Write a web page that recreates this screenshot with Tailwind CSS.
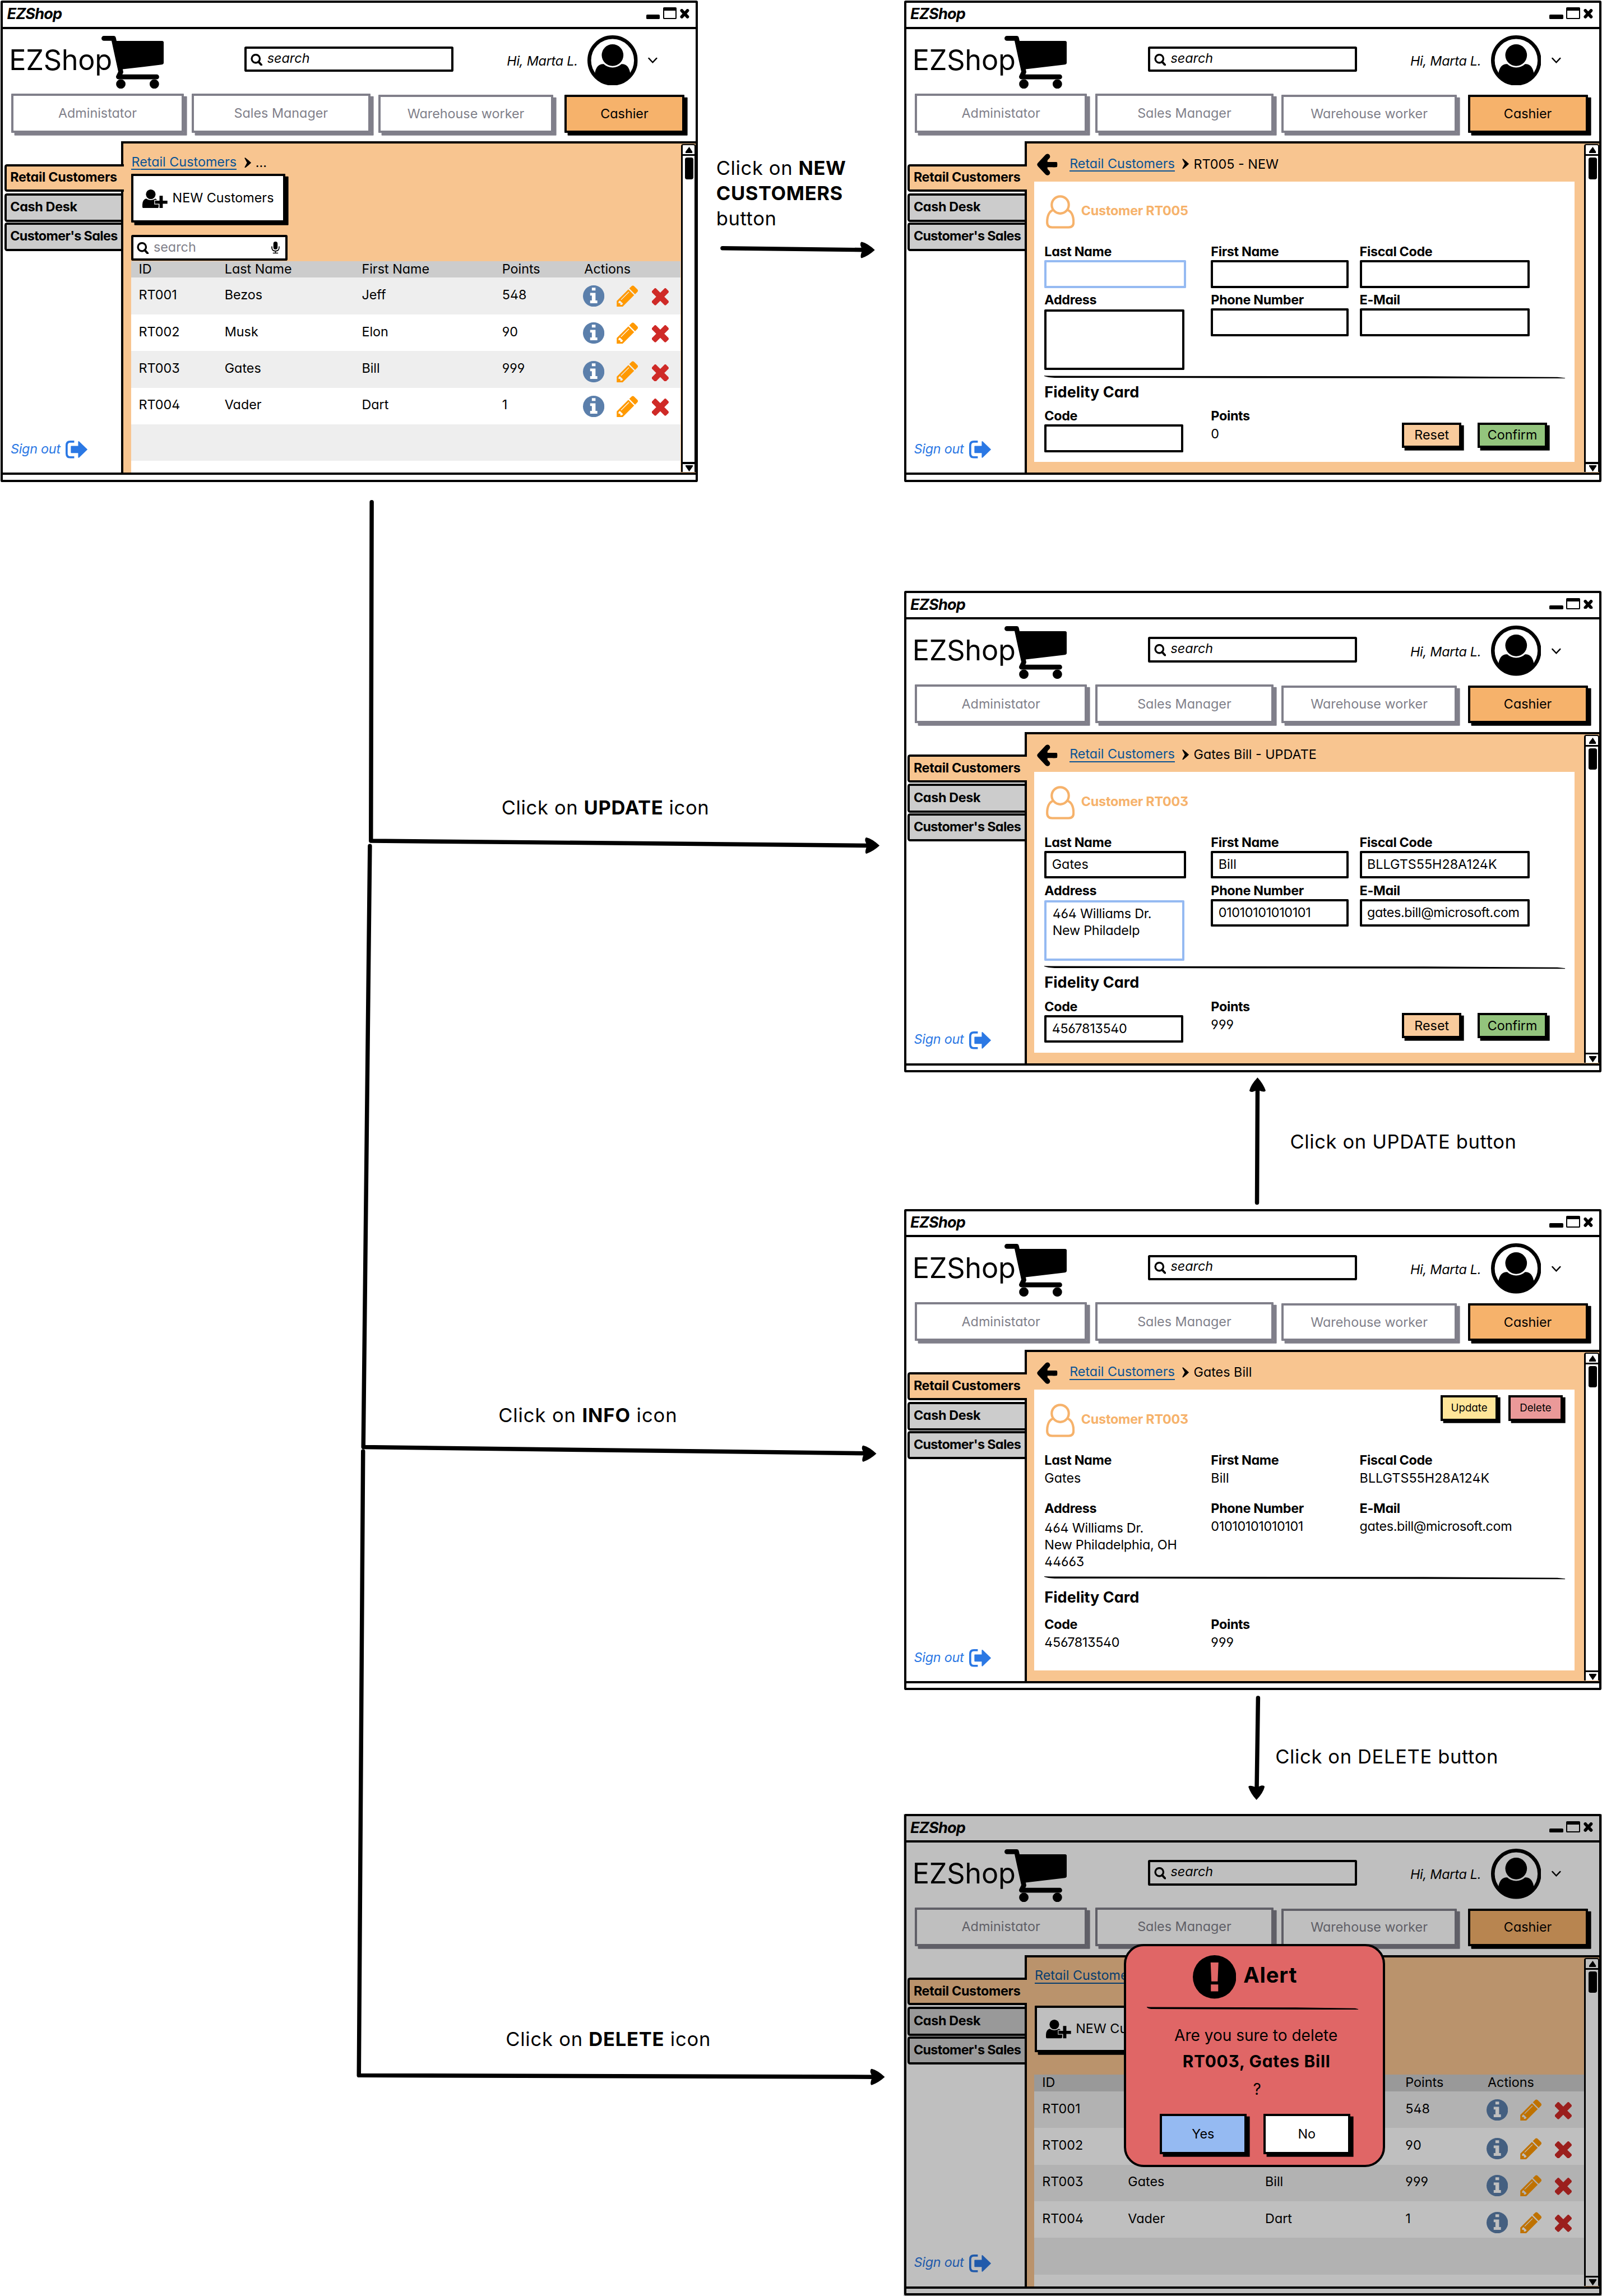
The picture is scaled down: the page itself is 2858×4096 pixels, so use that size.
<!DOCTYPE html>
<html lang="en">
<head>
<meta charset="utf-8">
<title>EZShop – Retail Customers flow</title>
<script src="https://cdn.jsdelivr.net/npm/@tailwindcss/browser@4"></script>
</head>
<body class="bg-white">
<svg class="hidden">
  <symbol id="cart" viewBox="0 0 119 101"><path d="M4.7 4.7H23L37 69 32.500 78.300H105.500" fill="none" stroke="#000" stroke-width="9.300" stroke-linecap="round" stroke-linejoin="round"/><path d="M24 9.700H116Q119 9.700 119 13V51Q119 54.500 115 55L38 64Z"/><circle cx="37" cy="92" r="9"/><circle cx="101" cy="92" r="9"/></symbol>
  <symbol id="avatar" viewBox="0 0 96 96"><circle cx="48" cy="48" r="44.500" fill="none" stroke="#000" stroke-width="7"/><circle cx="48" cy="37.800" r="20.700"/><path d="M14 74C15.500 62 21 54.500 31 55Q38 61.500 48 61.500T65 55C75 54.500 80.500 62 82 74A44 44 0 0 1 14 74Z"/></symbol>
  <symbol id="lens" viewBox="0 0 22 22"><circle cx="9.500" cy="9" r="7.400" fill="none" stroke="#000" stroke-width="3.400"/><path d="M14.500 14.500 20 20.500" stroke="#000" stroke-width="4" stroke-linecap="round"/></symbol>
  <symbol id="mic" viewBox="0 0 16 23"><rect x="4" width="8" height="15" rx="4"/><path d="M1 9V11Q1 18 8 18T15 11V9M8 18V22M3 22H13" fill="none" stroke="#000" stroke-width="1.800"/></symbol>
  <symbol id="crumb" viewBox="0 0 13 20"><path d="M0.500 1.500Q0 0 2 0.500 8 5 13 10 8 15 2 19.500 0 20 0.500 18.500L5 10Z"/></symbol>
  <symbol id="back" viewBox="0 0 39 42"><path d="M20 5.500 5.500 21 20 36.500M7 21H34" fill="none" stroke="#000" stroke-width="10" stroke-linecap="round" stroke-linejoin="round"/><path d="M8 21 20 9V33Z"/><path d="M30 16H36.500Q39 16 39 18.500V23.500Q39 26 36.500 26H30Z"/></symbol>
  <symbol id="person" viewBox="0 0 55 64"><g fill="none" stroke="#f6b26b" stroke-width="4.500"><circle cx="27.300" cy="18.800" r="16.300"/><path d="M13.500 28.500C5 32 2.300 42 2.300 52Q2.300 61.700 12 61.700H43Q52.700 61.700 52.700 52C52.700 42 50 32 41.500 28.500"/></g></symbol>
  <symbol id="adduser" viewBox="0 0 48 36"><circle cx="16" cy="9.200" r="9.200"/><path d="M7 17.500Q16 23 25 17.500 31 21 31 29V33Q31 36 28 36H3Q0 36 0 33V29Q0 20 7 17.500Z"/><path d="M32.700 12H39V21.300H48V27.300H39V36H32.700V27.300H24V21.300H32.700Z" stroke="#fff" stroke-width="2.500" paint-order="stroke"/></symbol>
  <symbol id="signout" viewBox="0 0 42 34"><path d="M16.500 2H9Q2 2 2 9V25Q2 32 9 32H16.500" fill="none" stroke="#2b78e4" stroke-width="4"/><path d="M11 10.300H24V1.500Q25 0.500 26 1.500L42 17 26 32.500Q25 33.500 24 32.500V23.700H11Q10 23.700 10 22.700V11.300Q10 10.300 11 10.300Z" fill="#2b78e4"/></symbol>
  <symbol id="info" viewBox="0 0 41 41"><circle cx="20.500" cy="20.500" r="20.500" fill="#5b7fab"/><path d="M17 4.500H24V10H17ZM13.700 14.500H24V29H27.500V34.300H13.700V29H17V19.500H13.700Z" fill="#fff"/></symbol>
  <symbol id="pencil" viewBox="0 0 1515 1536"><path fill="#ff9900" fill-rule="evenodd" d="M363 1408l91-91-235-235-91 91v107h128v128h107zM886 480q0-22-22-22-10 0-17 7l-542 542q-7 7-7 17 0 22 22 22 10 0 17-7l542-542q7-7 7-17zM832 288l416 416-832 832H0v-416zM1515 384q0 53-37 90l-166 166-416-416 166-165q36-38 90-38 53 0 91 38l235 234q37 39 37 91z"/></symbol>
  <symbol id="cross" viewBox="0 0 32 32"><g fill="#cf2a27"><rect x="-3" y="10.500" width="38" height="11" rx="2" transform="rotate(45 16 16)"/><rect x="-3" y="10.500" width="38" height="11" rx="2" transform="rotate(-45 16 16)"/></g></symbol>
  <symbol id="rule" viewBox="0 0 995 6" preserveAspectRatio="none"><path d="M0 0Q4 0.500 20 0.500L700 1.300 980 3 995 4.500V6L850 5.300 400 4.700 20 4.200Q6 3.500 0 1Z"/></symbol>
</svg>

<div class="w-[2858px] h-[4096px] overflow-hidden">
  <div id="board" class="relative w-[3060px] h-[4386px] [zoom:0.934] text-black text-[25px] leading-[30px] font-[Inter,'Liberation_Sans',sans-serif] [font-feature-settings:'cv11','ss01']"></div>
</div>

<script>
const icon = (id, cls) => `<svg class="${cls} shrink-0"><use href="#${id}"/></svg>`;

const link = '<span class="text-[#0b5394] border-b-[2.5px] border-[#0b5394] leading-[26px]">Retail Customers</span>';

const roles = [
  ['Administator', 'w-[329px] h-[74px] border-[#807f8a] text-[#807f8a] shadow-[6px_5px_0_#807f8a]'],
  ['Sales Manager', 'w-[341px] h-[74px] ml-[15.500px] border-[#807f8a] text-[#807f8a] shadow-[6px_5px_0_#807f8a]'],
  ['Warehouse worker', 'w-[335px] h-[72px] mt-[2px] ml-[15px] border-[#807f8a] text-[#807f8a] shadow-[6px_5px_0_#807f8a]'],
  ['Cashier', 'w-[229px] h-[72px] mt-[2px] ml-[21px] border-black bg-[#f6b26b] shadow-[6px_5px_0_#000]'],
];

const frame = (pos, body, over = '') => `
<section class="absolute ${pos} w-[1332.500px] h-[919.500px] border-[5px] rounded-[3px] border-black bg-white flex flex-col">
  <div class="h-[50px] border-b-[4.500px] border-black flex items-start pl-[8px] pr-[12px] pt-px shrink-0">
    <span class="mt-[6px] text-[29px] font-bold italic tracking-[-0.03em]">EZShop</span>
    <div class="ml-auto flex items-start">
      <i class="w-[26px] h-[8px] mt-[22px] bg-black rounded-[2px]"></i>
      <i class="w-[26px] h-[22px] mt-[8px] ml-[6px] border-[3px] border-t-[7px] border-black rounded-[2px]"></i>
      <svg class="w-[18px] h-[18px] mt-[11px] ml-[7px]" viewBox="0 0 18 18"><path d="M3.500 3 14.500 15M14.500 3 3.500 15" stroke="#000" stroke-width="6" stroke-linecap="round"/></svg>
    </div>
  </div>
  <div class="h-[124px] flex items-start pl-[12px] shrink-0 relative">
    <span class="mt-[30px] w-[176px] text-[54px] leading-[58px] tracking-[-0.005em] whitespace-nowrap">EZShop</span>
    ${icon('cart', 'w-[119px] h-[101px] mt-[13px]')}
    <div class="ml-[155px] mt-[33.500px] w-[399px] h-[48.500px] border-[4.500px] border-black rounded-[3px] flex items-center pl-[7px]">
      ${icon('lens', 'w-[23px] h-[23px] mt-[2px]')}
      <span class="ml-[9px] mb-[4px] italic">search</span>
    </div>
    <span class="ml-[102px] mt-[46.500px] italic whitespace-nowrap w-[154px] tracking-[-0.01em]">Hi, Marta L.</span>
    ${icon('avatar', 'w-[96px] h-[96px] mt-[12px]')}
    <svg class="w-[18px] h-[12px] ml-[20px] mt-[54px]" viewBox="0 0 18 12"><path d="M1.500 2 9 10 16.500 2" fill="none" stroke="#000" stroke-width="2.500" stroke-linecap="round"/></svg>
  </div>
  <div class="flex pl-[16.500px] h-[91px] shrink-0">
    ${roles.map(([t, c]) => `<div class="border-[4.500px] rounded-[1px] flex items-center justify-center ${c}">${t}</div>`).join('')}
  </div>
  <div class="flex h-[637px] shrink-0">
    <nav class="w-[226px] flex flex-col pt-[43px] font-bold tracking-[-0.028em] border-b-[4.500px] border-black relative">
      <div class="ml-[3px] -mr-[5px] h-[53px] bg-[#f8c590] border-[4.500px] border-r-0 border-black rounded-l-[5px] pl-[7px] pb-[2px] flex items-center relative z-10 tracking-[-0.013em]">Retail Customers</div>
      <div class="ml-[3px] mt-[3px] h-[55px] bg-[#ccc] border-[4.500px] border-r-0 border-black rounded-l-[5px] pl-[7px] pb-[3px] flex items-center tracking-[-0.015em]">Cash Desk</div>
      <div class="ml-[3px] mt-[1px] h-[54px] bg-[#ccc] border-[4.500px] border-r-0 border-black rounded-l-[5px] pl-[7px] pb-[2px] flex items-center whitespace-nowrap">Customer's Sales</div>
      <div class="mt-auto mb-[27px] ml-[15px] flex items-center font-normal italic text-[#2b78e4] tracking-[-0.01em]"><span class="w-[105px] mb-[3px]">Sign out</span>${icon('signout', 'w-[42px] h-[34px]')}</div>
    </nav>
    <main class="flex-1 flex border-[4.500px] border-r-0 border-black bg-[#f8c590]">
      <div class="flex-1 pl-[14.500px] pr-[1px] flex flex-col">${body}</div>
      <div class="w-[28.500px] my-px border-l-[3.500px] border-t-[3px] border-r-[3px] rounded-t-[4px] border-black bg-white flex flex-col items-center">
        <svg class="w-[14px] h-[12px] mt-[3px] ml-[2px] shrink-0" viewBox="0 0 14 12"><path d="M7 0 13 9V12H0V9Z"/></svg>
        <i class="w-full h-[3.500px] mt-[2px] bg-black shrink-0"></i>
        <i class="w-[16px] h-[41px] mt-[3px] ml-[2px] bg-black rounded-[4px] shrink-0"></i>
        <i class="w-full h-[3.500px] mt-auto bg-black shrink-0"></i>
        <svg class="w-[14px] h-[12px] mt-[3px] mb-[1px] ml-[2px] shrink-0" viewBox="0 0 14 12"><path d="M7 12 14 2V0H0V2Z"/></svg>
      </div>
    </main>
  </div>
  ${over}
</section>`;

/* customer list */
const people = [['RT001', 'Bezos', 'Jeff', '548'], ['RT002', 'Musk', 'Elon', '90'], ['RT003', 'Gates', 'Bill', '999'], ['RT004', 'Vader', 'Dart', '1']];
const cols = 'grid grid-cols-[164px_262px_268px_156px_1fr] pl-[15px] items-center shrink-0';
const list = (newBtn, search, shifts) => `
  <div class="flex items-center h-[36px] mt-[18px] pl-px shrink-0"><span class="w-[216px] flex">${link}</span>${icon('crumb', 'w-[13px] h-[20px]')}<span class="ml-[8px]">...</span></div>
  <div class="h-[170px] shrink-0">
    <div class="${newBtn} w-[294px] border-[4.500px] border-black rounded-[1px] bg-white shadow-[6px_5px_0_#000] flex items-center pl-[17px] ml-px">${icon('adduser', 'w-[48px] h-[36px] mt-[2px]')}<span class="ml-[9px] whitespace-nowrap">NEW Customers</span></div>
    ${search}
  </div>
  <div class="${cols} h-[32px] bg-[#ccc] pb-[3px]"><span>ID</span><span>Last Name</span><span>First Name</span><span>Points</span><span class="ml-px">Actions</span></div>
  ${people.map((p, i) => `<div class="${cols} h-[70px] ${i % 2 ? 'bg-white' : 'bg-[#eee]'}">${p.map(v => `<span class="pb-[4px]">${v}</span>`).join('')}<div class="flex items-center ${shifts[i]}">${icon('info', 'w-[41px] h-[41px] -ml-[1px]')}${icon('pencil', 'w-[41px] h-[41px] ml-[23px]')}${icon('cross', 'w-[32px] h-[33px] ml-[26px] mt-[3px]')}</div></div>`).join('')}
  <div class="h-[70px] bg-[#eee] shrink-0"></div><div class="flex-1 bg-white"></div>`;
const miniSearch = `<div class="w-[299px] h-[49px] mt-[23.500px] bg-white border-[4.500px] border-black rounded-[3px] flex items-center pl-[7px] pr-[11px] relative z-10">${icon('lens', 'w-[23px] h-[23px] mt-[1px]')}<span class="ml-[9px] mb-[3px] text-[#807f8a]">search</span>${icon('mic', 'w-[16px] h-[23px] ml-auto')}</div>`;

/* customer card */
const field = (w, v = '', c = 'border-black') => `<div class="${w} h-[53px] border-[4.500px] rounded-[2px] ${c} flex items-center pl-[10px] pb-[1px] whitespace-nowrap">${v}</div>`;
const plain = v => `<div class="leading-[37px]">${v}</div>`;
const cell = (label, content) => `<div><div class="font-bold leading-[31px] tracking-[-0.015em]">${label}</div>${content}</div>`;
const card = (crumb, o) => `
  <div class="flex items-center h-[72px] pt-[6px] shrink-0">${icon('back', 'w-[39px] h-[42px] ml-[5.500px] mt-[2px]')}<span class="w-[215px] ml-[23px] flex">${link}</span>${icon('crumb', 'w-[13px] h-[20px]')}<span class="ml-[9px] whitespace-nowrap">${crumb}</span></div>
  <div class="w-[1031.500px] h-[536px] bg-white pl-[19.500px] pr-[22.500px] pt-[26.500px] shrink-0">
    <div class="flex items-center h-[64px] mb-[29px] pl-[3px]">${icon('person', 'w-[55px] h-[64px]')}<span class="ml-[12px] mb-[4px] font-bold text-[#f6b26b] tracking-[-0.01em]">Customer ${o.id}</span>${o.tools || ''}</div>
    <div class="grid grid-cols-[318px_284px_1fr] h-[84px] mb-[8px]">${cell('Last Name', o.last)}${cell('First Name', o.first)}${cell('Fiscal Code', o.fiscal)}</div>
    <div class="grid grid-cols-[318px_284px_1fr] ${o.rowH}">${cell('Address', o.address)}${cell('Phone Number', o.phone)}${cell('E-Mail', o.mail)}</div>
    ${icon('rule', 'block w-[995px] h-[6px] mt-[10px]')}
    <div class="text-[29px] leading-[36px] font-bold ${o.fid}">Fidelity Card</div>
    <div class="grid grid-cols-[318px_284px_1fr]">${cell('Code', o.code)}${cell('Points', `<div class="leading-[36px]">${o.points}</div>`)}${o.buttons || ''}</div>
  </div>`;
const buttons = `<div class="flex pl-[81px] pt-[27px]"><div class="w-[113.500px] h-[48px] border-[4.500px] border-black bg-[#f9cb9c] shadow-[5px_5px_0_#000] flex items-center justify-center">Reset</div><div class="ml-[30.500px] w-[133.500px] h-[48px] border-[4.500px] border-black bg-[#93c47d] shadow-[5px_5px_0_#000] flex items-center justify-center">Confirm</div></div>`;
const tools = `<div class="ml-auto self-start -mt-[16px] flex text-[20px]"><div class="w-[108.500px] h-[49px] border-[4.500px] border-black bg-[#ffe599] shadow-[5px_4px_0_#000] flex items-center justify-center">Update</div><div class="ml-[21px] w-[103px] h-[49px] border-[4.500px] border-black bg-[#ea9999] shadow-[5px_4px_0_#000] flex items-center justify-center">Delete</div></div>`;

const editBase = { rowH: 'h-[149px]', fid: 'mt-[8px] mb-[13px]', buttons };
const blankForm = card('RT005 - NEW', { ...editBase, id: 'RT005', last: field('w-[271px]', '', 'border-[#95baf2]'), first: field('w-[263px]'), fiscal: field('w-[325px]'),
  address: '<div class="mt-[2px] w-[267px] h-[116px] border-[4.500px] border-black rounded-[2px]"></div>', phone: field('w-[263px]'), mail: field('w-[325px]'), code: field('w-[265px]'), points: '0' });
const updateForm = card('Gates Bill - UPDATE', { ...editBase, id: 'RT003', last: field('w-[271px]', 'Gates'), first: field('w-[263px]', 'Bill'), fiscal: field('w-[325px]', 'BLLGTS55H28A124K'),
  address: '<div class="mt-[2px] w-[267px] h-[116px] border-[4.500px] border-[#95baf2] rounded-[2px] pl-[11px] pt-[6px] leading-[32px] tracking-[-0.01em]">464 Williams Dr.<br>New Philadelp</div>',
  phone: field('w-[263px]', '<span class="tracking-[-0.015em]">01010101010101</span>'), mail: field('w-[325px]', '<span class="tracking-[-0.016em]">gates.bill@microsoft.com</span>'), code: field('w-[265px]', '<span class="tracking-[-0.015em]">4567813540</span>'), points: '999' });
const infoCard = card('Gates Bill', { id: 'RT003', tools, rowH: 'h-[135px]', fid: 'mt-[16px] mb-[19px]', last: plain('Gates'), first: plain('Bill'), fiscal: plain('BLLGTS55H28A124K'),
  address: '<div class="mt-[6px] leading-[32px] tracking-[-0.01em]">464 Williams Dr.<br>New Philadelphia, OH<br>44663</div>', phone: plain('<span class="tracking-[-0.015em]">01010101010101</span>'), mail: plain('<span class="tracking-[-0.016em]">gates.bill@microsoft.com</span>'), code: plain('<span class="tracking-[-0.015em]">4567813540</span>'), points: '999' });

/* delete confirmation */
const alertBox = `
  <div class="absolute -inset-[5px] bg-black/25 z-20"></div>
  <div class="absolute z-30 left-[416px] top-[244px] w-[498.500px] h-[425.500px] bg-[#e06666] border-[5px] border-black rounded-[38px] flex flex-col items-center pt-[17px]">
    <div class="flex items-center self-start ml-[127px] h-[83px] shrink-0">
      <svg class="w-[83px] h-[83px] shrink-0" viewBox="0 0 83 83"><circle cx="41.500" cy="41.500" r="41.500"/><path d="M34 14H49L47.500 50H35.500ZM34.500 56H48.500V69H34.500Z" fill="#e06666"/></svg>
      <span class="ml-[14px] mb-[7px] text-[41px] leading-[50px] font-bold tracking-[0.02em]">Alert</span>
    </div>
    <svg class="w-[404px] h-[6px] mt-[15px] ml-[-6px] shrink-0"><use href="#rule"/></svg>
    <div class="mt-[30px] ml-[6px] text-[30px] leading-[40px]">Are you sure to delete</div>
    <div class="mt-[9px] ml-[8px] text-[32px] leading-[40px] font-bold tracking-[0.025em]">RT003, Gates Bill</div>
    <div class="mt-[14px] ml-[10px] text-[30px] leading-[40px]">?</div>
    <div class="flex mt-[26px] ml-[2px]">
      <div class="w-[166px] h-[77px] border-[4.500px] border-black bg-[#95baf2] shadow-[6px_5px_0_#000] flex items-center justify-center">Yes</div>
      <div class="ml-[32px] w-[166px] h-[77px] border-[4.500px] border-black bg-white shadow-[6px_5px_0_#000] flex items-center justify-center">No</div>
    </div>
  </div>`;

const note = (pos, html) => `<div class="absolute ${pos} text-[37px] leading-[48px] tracking-[0.018em] whitespace-nowrap">${html}</div>`;

document.getElementById('board').innerHTML =
  frame('left-px top-px', list('h-[94px] mt-[3px]', miniSearch, ['', 'mt-[2px]', 'mt-[10px]', 'mt-[2px]'])) +
  frame('left-[1726.500px] top-px', blankForm) +
  frame('left-[1726.500px] top-[1129px]', updateForm) +
  frame('left-[1726.500px] top-[2309px]', infoCard) +
  frame('left-[1726.500px] top-[3465px]', list('h-[89px] mt-[38px]', '', ['mt-[1px]', 'mt-[10px]', 'mt-[10px]', 'mt-[12px]']), alertBox) +
  note('left-[1368px] top-[298px]', 'Click on <b>NEW<br>CUSTOMERS</b><br>button') +
  note('left-[958px] top-[1519px] tracking-[0.01em]', 'Click on <b>UPDATE</b> icon') +
  note('left-[952px] top-[2680px] tracking-[0.026em]', 'Click on <b>INFO</b> icon') +
  note('left-[966px] top-[3871px] tracking-[0.022em]', 'Click on <b>DELETE</b> icon') +
  note('left-[2464px] top-[2157px]', 'Click on UPDATE button') +
  note('left-[2436px] top-[3332px] tracking-[0.03em]', 'Click on DELETE button') +
  `<svg class="absolute inset-0 w-[3060px] h-[4386px] pointer-events-none" viewBox="0 0 3060 4386">
    <defs><path id="tip" d="M0 0Q-14 -13 -25 -15.500 -28 -15 -27.500 -9L-24 0-26.500 8Q-28 15 -25 15.500-12 11 0 0Z"/></defs>
    <g fill="none" stroke="#000" stroke-width="8" stroke-linecap="round" stroke-linejoin="round">
      <path d="M1380 474 1650 477.300"/>
      <path d="M710 959 708.500 1606 1660 1615"/>
      <path d="M706.500 1616 694 2764 1655 2776"/>
      <path d="M693.500 2772 685.500 3964 1670 3967"/>
      <path d="M2401 2297 2402 2080"/>
      <path d="M2403 3243 2400.500 3415"/>
    </g>
    <use href="#tip" transform="translate(1671 477.500)"/>
    <use href="#tip" transform="translate(1680 1615)"/>
    <use href="#tip" transform="translate(1674 2776.500)"/>
    <use href="#tip" transform="translate(1690 3967)"/>
    <use href="#tip" transform="translate(2402 2058) rotate(-90)"/>
    <use href="#tip" transform="translate(2400 3438) rotate(90)"/>
  </svg>`;
</script>
</body>
</html>
